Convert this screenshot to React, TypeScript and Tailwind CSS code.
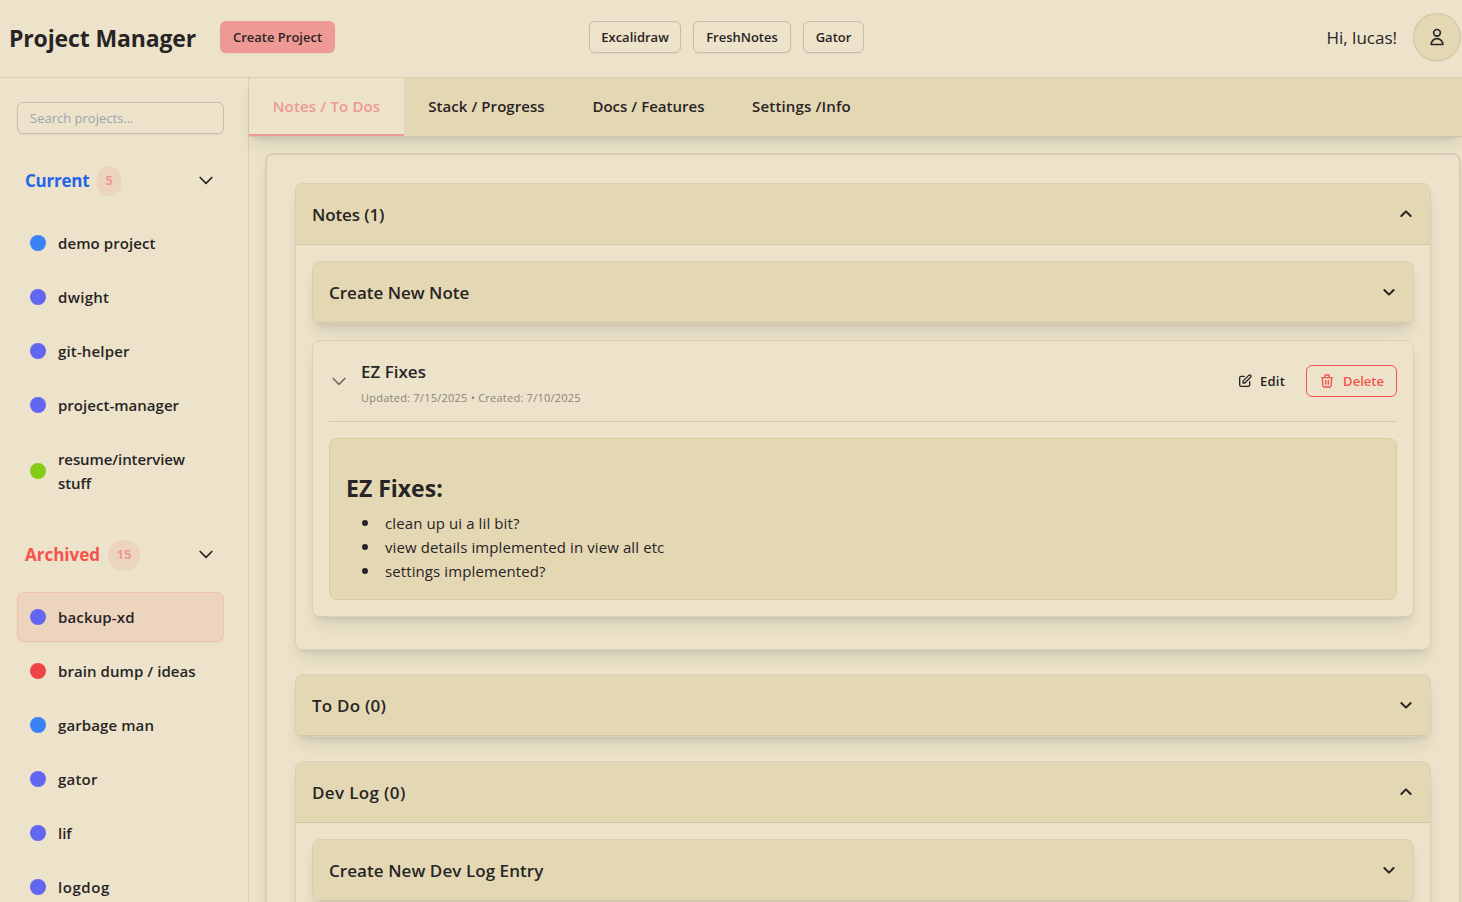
import React from "react";

type Project = { name: string; dot: string; text: string; active?: boolean };

const current: Project[] = [
  { name: "demo project", dot: "bg-[#3b82f6]", text: "tracking-[0.08px]" },
  { name: "dwight", dot: "bg-[#6366f1]", text: "tracking-[0.3px]" },
  { name: "git-helper", dot: "bg-[#6366f1]", text: "tracking-[0.15px]" },
  { name: "project-manager", dot: "bg-[#6366f1]", text: "tracking-[0.03px]" },
  { name: "resume/interview stuff", dot: "bg-[#84cc16]", text: "tracking-[-0.1px]" },
];

const archived: Project[] = [
  { name: "backup-xd", dot: "bg-[#6366f1]", text: "tracking-[0.14px]", active: true },
  { name: "brain dump / ideas", dot: "bg-[#ef4444]", text: "tracking-[0.07px]" },
  { name: "garbage man", dot: "bg-[#3b82f6]", text: "tracking-[0.1px]" },
  { name: "gator", dot: "bg-[#6366f1]", text: "tracking-[0.2px]" },
  { name: "lif", dot: "bg-[#6366f1]", text: "" },
  { name: "logdog", dot: "bg-[#6366f1]", text: "tracking-[0.55px]" },
];

const tasks = ["clean up ui a lil bit?", "view details implemented in view all etc", "settings implemented?"];

function Chevron({ className, width = 2, up = false }: { className: string; width?: number; up?: boolean }) {
  return (
    <svg className={className} viewBox="0 0 24 24" fill="none" stroke="currentColor" strokeWidth={width} strokeLinecap="round" strokeLinejoin="round">
      <path d={up ? "M5 15l7-7 7 7" : "M19 9l-7 7-7-7"} />
    </svg>
  );
}

function ProjectRow({ p }: { p: Project }) {
  return (
    <li className={`flex w-[207px] items-center gap-3 rounded-lg border px-3 py-3 ${p.active ? "border-[#ef9995]/30 bg-[#ef9995]/20 shadow-xs" : "border-transparent"}`}>
      <span className={`size-4 shrink-0 rounded-full ${p.dot}`} />
      <span className={`w-[140px] text-[15px] leading-6 font-semibold ${p.text}`}>{p.name}</span>
    </li>
  );
}

function Group({ title, count, color, badge, items }: { title: string; count: number; color: string; badge: string; items: Project[] }) {
  return (
    <section>
      <div className="flex h-[29px] items-center pl-2 pr-2">
        <h2 className={`text-[17px] leading-7 font-bold ${color}`}>{title}</h2>
        <span className={`flex h-[29px] items-center justify-center rounded-full bg-[#ef9995]/20 text-[13px] font-bold text-[#ef9995] shadow-xs ${badge}`}>{count}</span>
        <Chevron className="mb-[2px] ml-auto size-5" />
      </div>
      <ul className="mt-[23px] flex flex-col gap-1">
        {items.map((p) => <ProjectRow key={p.name} p={p} />)}
      </ul>
    </section>
  );
}

function Panel({ title, open = false, children, text }: { title: string; open?: boolean; children?: React.ReactNode; text: string }) {
  return (
    <section className="overflow-hidden rounded-lg border border-[#282425]/10 bg-[#ece3ca] shadow-lg">
      <div className="flex h-[61px] items-center justify-between border-b border-[#282425]/10 bg-[#e4d8b4] px-4">
        <h3 className={`pt-[2px] text-[17px] leading-7 font-semibold ${text}`}>{title}</h3>
        <Chevron className="size-4" width={3} up={open} />
      </div>
      {children}
    </section>
  );
}

const outline = "flex h-8 items-center justify-center rounded-md border border-[#282425]/20 pt-px text-[13px] font-semibold shadow-xs";

export default function App() {
  return (
    <div className="flex h-[902px] w-[1462px] flex-col overflow-hidden bg-[#ece3ca] font-['Open_Sans','Noto_Sans',sans-serif] text-[#282425]">
      <header className="grid h-[78px] shrink-0 grid-cols-[589px_1fr_auto] items-center border-b border-[#282425]/10 pb-[3px]">
        <div className="flex items-center">
          <h1 className="w-[220px] pt-[2px] pl-[9px] text-[23px] leading-8 font-bold tracking-[-0.14px] whitespace-nowrap">Project Manager</h1>
          <button className="h-8 w-[115px] rounded-md bg-[#ef9995] pt-px text-[13px] font-semibold shadow-xs">Create Project</button>
        </div>
        <nav className="flex gap-3">
          <button className={`${outline} w-[92px]`}>Excalidraw</button>
          <button className={`${outline} w-[98px]`}>FreshNotes</button>
          <button className={`${outline} w-[61px]`}>Gator</button>
        </nav>
        <div className="flex items-center gap-4 pr-px">
          <span className="pt-[2px] text-[17px]">Hi, lucas!</span>
          <button className="flex size-12 items-center justify-center rounded-full border border-[#282425]/10 bg-[#e4d8b4] shadow-xs">
            <svg className="size-5" viewBox="0 0 24 24" fill="none" stroke="currentColor" strokeWidth="2" strokeLinecap="round" strokeLinejoin="round">
              <path d="M16 7a4 4 0 11-8 0 4 4 0 018 0zM12 14a7 7 0 00-7 7h14a7 7 0 00-7-7z" />
            </svg>
          </button>
        </div>
      </header>

      <div className="flex min-h-0 flex-1">
        <aside className="flex w-[249px] shrink-0 flex-col overflow-hidden border-r border-[#282425]/10 pl-[17px] pr-6 pt-6">
          <input className="h-8 w-[207px] shrink-0 rounded-md border border-[#282425]/20 px-3 text-[13px] shadow-xs placeholder:text-[#9ca3af]" placeholder="Search projects..." />
          <div className="mt-8 flex flex-col gap-8">
            <Group title="Current" count={5} color="text-[#2563eb] tracking-[-0.25px]" badge="ml-2 w-6" items={current} />
            <Group title="Archived" count={15} color="text-[#f4524d]" badge="ml-2 w-8" items={archived} />
          </div>
        </aside>

        <main className="flex min-w-0 flex-1 flex-col">
          <nav className="z-10 flex h-[59px] shrink-0 border-b border-[#282425]/10 bg-[#e4d8b4] text-[15px] font-semibold shadow-lg">
            <button className="w-[155px] border-b-2 border-[#ef9995] bg-[#ece3ca] tracking-[0.16px] text-[#ef9995]">Notes / To Dos</button>
            <button className="w-[165px] border-b-2 border-transparent tracking-[0.06px]">Stack / Progress</button>
            <button className="w-[159px] border-b-2 border-transparent tracking-[0.03px]">Docs / Features</button>
            <button className="w-[147px] border-b-2 border-transparent tracking-[0.16px]">Settings /Info</button>
          </nav>

          <div className="min-h-0 flex-1 overflow-hidden pl-4 pr-px pt-4">
            <div className="flex h-[1000px] flex-col gap-6 rounded-lg border-2 border-[#282425]/10 p-7 shadow-lg">
              <Panel title="Notes (1)" open text="tracking-[-0.12px]">
                <div className="flex flex-col gap-4 px-4 pt-4 pb-8">
                  <Panel title="Create New Note" text="" />
                  <article className="rounded-lg border border-[#282425]/10 p-4 shadow-lg">
                    <div className="flex h-[65px] items-center border-b border-[#dbca9a] pb-4">
                      <Chevron className="size-5 opacity-60" />
                      <div className="ml-3 pt-[2px]">
                        <h4 className="text-[17px] leading-7 font-semibold">EZ Fixes</h4>
                        <p className="mt-1 text-[11px] leading-4 tracking-[0.24px] opacity-50">Updated: 7/15/2025 • Created: 7/10/2025</p>
                      </div>
                      <button className="ml-auto flex h-8 items-center text-[13px] font-semibold tracking-[0.2px]">
                        <svg className="mr-[7px] size-4" viewBox="0 0 24 24" fill="none" stroke="currentColor" strokeWidth="2" strokeLinecap="round" strokeLinejoin="round">
                          <path d="M11 5H6a2 2 0 00-2 2v11a2 2 0 002 2h11a2 2 0 002-2v-5m-1.414-9.414a2 2 0 112.828 2.828L11.828 15H9v-2.828l8.586-8.586z" />
                        </svg>
                        <span className="pt-[2px]">Edit</span>
                      </button>
                      <button className="ml-[21px] flex h-8 w-[91px] items-center justify-center rounded-md border border-[#f4524d] text-[13px] font-semibold text-[#f4524d]">
                        <svg className="mr-2 size-4" viewBox="0 0 24 24" fill="none" stroke="currentColor" strokeWidth="2" strokeLinecap="round" strokeLinejoin="round">
                          <path d="M19 7l-.867 12.142A2 2 0 0116.138 21H7.862a2 2 0 01-1.995-1.858L5 7m5 4v6m4-6v6m1-10V4a1 1 0 00-1-1h-4a1 1 0 00-1 1v3M4 7h16" />
                        </svg>
                        <span className="pt-[2px]">Delete</span>
                      </button>
                    </div>
                    <div className="mt-4 h-[162px] rounded-lg border border-[#dbca9a] bg-[#e4d8b4] p-4">
                      <h2 className="mt-[17px] mb-[7px] text-[23px] leading-8 font-bold">EZ Fixes:</h2>
                      <ul className="pl-4 text-[15px] leading-6 tracking-[0.1px]">
                        {tasks.map((task) => (
                          <li key={task} className="flex items-center gap-[17px]">
                            <span className="size-[6px] rounded-full bg-[#282425]" />
                            {task}
                          </li>
                        ))}
                      </ul>
                    </div>
                  </article>
                </div>
              </Panel>
              <Panel title="To Do (0)" text="tracking-[0.22px]" />
              <Panel title="Dev Log (0)" open text="tracking-[0.36px]">
                <div className="flex flex-col gap-4 p-4">
                  <Panel title="Create New Dev Log Entry" text="tracking-[0.07px]" />
                  <div className="h-32" />
                </div>
              </Panel>
            </div>
          </div>
        </main>
      </div>
    </div>
  );
}
